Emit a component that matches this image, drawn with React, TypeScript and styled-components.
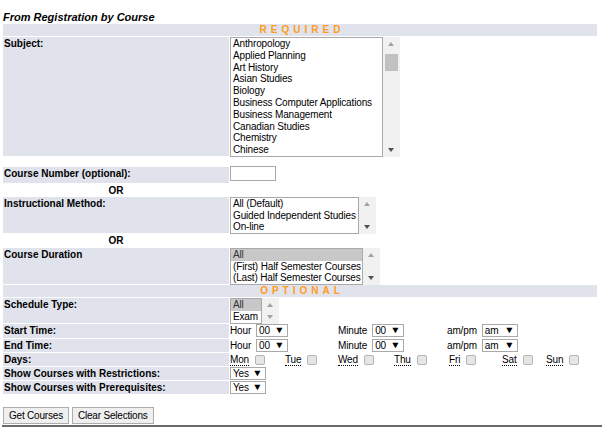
import React from "react";
import styled, { createGlobalStyle } from "styled-components";

const GlobalStyle = createGlobalStyle`
  html, body { margin: 0; padding: 0; background: #ffffff; }
  body {
    font-family: "Liberation Sans", Arial, sans-serif;
    color: #000000;
  }
`;

const LAV = "#e1e3ec";

const Page = styled.div`
  width: 600px;
  padding: 0 0 0 3px;
`;

const Title = styled.div`
  font-size: 11px;
  font-weight: bold;
  font-style: italic;
  line-height: 14px;
  padding-top: 10px;
  height: 14px;
`;

const FormTable = styled.div`
  width: 594px;
  display: flex;
  flex-direction: column;
  gap: 1px;
`;

const SectionHeader = styled.div`
  height: 12px;
  background: ${LAV};
  color: #ff9c1a;
  font-size: 10px;
  font-weight: bold;
  letter-spacing: 4px;
  line-height: 12px;
  text-align: center;
  padding-left: 4px;
`;

const Row = styled.div<{ $h: number }>`
  display: flex;
  height: ${(p) => p.$h}px;
`;

const Label = styled.div<{ $plain?: boolean }>`
  width: 226px;
  flex: none;
  background: ${(p) => (p.$plain ? "transparent" : LAV)};
  font-size: 10px;
  font-weight: bold;
  line-height: 13px;
  padding-left: 1px;
  box-sizing: border-box;
`;

const OrLabel = styled(Label)`
  text-align: center;
  padding-left: 0;
`;

const Value = styled.div`
  flex: 1;
  padding-left: 1px;
  font-size: 10px;
  letter-spacing: -0.15px;
  line-height: 13px;
  display: flex;
  align-items: flex-start;
`;

const ListWrap = styled.div`
  display: flex;
  align-items: stretch;
`;

const ListBox = styled.div<{ $w: number; $h: number; $lh: number }>`
  width: ${(p) => p.$w}px;
  height: ${(p) => p.$h}px;
  border: 1px solid #a9a9a9;
  box-sizing: border-box;
  overflow: hidden;
  font-size: 10px;
  line-height: ${(p) => p.$lh}px;
  background: #fff;
`;

const Option = styled.div<{ $selected?: boolean }>`
  padding-left: 2px;
  white-space: nowrap;
  background: ${(p) => (p.$selected ? "#c8c8c8" : "transparent")};
  color: ${(p) => (p.$selected ? "#333" : "#000")};
`;

const Scroll = styled.div<{ $h: number }>`
  width: 17px;
  height: ${(p) => p.$h}px;
  background: #f1f1f1;
  position: relative;
  flex: none;
`;

const Arrow = styled.div<{ $dir: "up" | "down"; $active?: boolean }>`
  position: absolute;
  left: 5px;
  ${(p) => (p.$dir === "up" ? "top: 5px;" : "bottom: 5px;")}
  width: 0;
  height: 0;
  border-left: 3.5px solid transparent;
  border-right: 3.5px solid transparent;
  ${(p) =>
    p.$dir === "up"
      ? `border-bottom: 4px solid ${p.$active ? "#505050" : "#a3a3a3"};`
      : `border-top: 4px solid ${p.$active ? "#505050" : "#a3a3a3"};`}
`;

const Thumb = styled.div`
  position: absolute;
  left: 2px;
  right: 2px;
  top: 17px;
  height: 17px;
  background: #c1c1c1;
`;

const TextInput = styled.div`
  width: 46px;
  height: 15px;
  border: 1px solid #a9a9a9;
  box-sizing: border-box;
  margin-top: -1px;
`;

const Drop = styled.div<{ $w: number }>`
  width: ${(p) => p.$w}px;
  height: 13px;
  border: 1px solid #a9a9a9;
  box-sizing: border-box;
  display: flex;
  align-items: center;
  justify-content: space-between;
  padding: 0 3px 0 2px;
  font-size: 10px;
  line-height: 11px;
  background: #fff;
`;

const Caret = styled.span`
  font-size: 9px;
  line-height: 11px;
  transform: scaleX(1.15);
`;

const TimeGrid = styled.div`
  display: grid;
  grid-template-columns: 108px 109px 109px;
`;

const TimeCell = styled.div`
  display: flex;
  align-items: center;
  gap: 5px;
  height: 13px;
`;

const DaysGrid = styled.div`
  display: flex;
`;

const DayCell = styled.div<{ $w: number }>`
  display: flex;
  align-items: center;
  gap: 6px;
  height: 13px;
  width: ${(p) => p.$w}px;
`;

const Abbr = styled.span`
  border-bottom: 1px dotted #000;
  line-height: 11px;
`;

const Check = styled.span`
  width: 10px;
  height: 10px;
  border: 1px solid #b4b4b4;
  border-radius: 2px;
  background: #e6e6e6;
  box-sizing: border-box;
  display: inline-block;
`;

const Spacer = styled.div<{ $h: number }>`
  height: ${(p) => p.$h}px;
`;

const ButtonBar = styled.div`
  display: flex;
  gap: 3px;
  padding-top: 13px;
  height: 17px;
`;

const Button = styled.div`
  height: 17px;
  box-sizing: border-box;
  border: 1px solid #adadad;
  background: #efefef;
  font-size: 10px;
  letter-spacing: -0.2px;
  line-height: 15px;
  padding: 0 5px;
`;

const Rule = styled.div`
  margin-top: 1px;
  margin-left: -1px;
  width: 600px;
  height: 2px;
  background: #6b6b6b;
`;

function List({
  items, w, h, lh, selected, up, down, thumb,
}: {
  items: string[]; w: number; h: number; lh: number; selected?: number;
  up?: boolean; down?: boolean; thumb?: boolean;
}) {
  return (
    <ListWrap>
      <ListBox $w={w} $h={h} $lh={lh}>
        {items.map((t, i) => (
          <Option key={t} $selected={i === selected}>{t}</Option>
        ))}
      </ListBox>
      <Scroll $h={h}>
        <Arrow $dir="up" $active={up} />
        {thumb && <Thumb />}
        <Arrow $dir="down" $active={down} />
      </Scroll>
    </ListWrap>
  );
}

function Select({ w, value }: { w: number; value: string }) {
  return (
    <Drop $w={w}>
      {value}
      <Caret>▼</Caret>
    </Drop>
  );
}

function TimeRow() {
  return (
    <TimeGrid>
      <TimeCell>Hour <Select w={32} value="00" /></TimeCell>
      <TimeCell>Minute <Select w={32} value="00" /></TimeCell>
      <TimeCell>am/pm <Select w={36} value="am" /></TimeCell>
    </TimeGrid>
  );
}

const subjects = [
  "Anthropology", "Applied Planning", "Art History", "Asian Studies", "Biology",
  "Business Computer Applications", "Business Management", "Canadian Studies",
  "Chemistry", "Chinese",
];

const days = [
  { d: "Mon", w: 55 }, { d: "Tue", w: 53 }, { d: "Wed", w: 56 }, { d: "Thu", w: 55 },
  { d: "Fri", w: 53 }, { d: "Sat", w: 44 }, { d: "Sun", w: 40 },
];

export default function App() {
  return (
    <>
      <GlobalStyle />
      <Page>
        <Title>From Registration by Course</Title>
        <FormTable>
          <SectionHeader>REQUIRED</SectionHeader>
          <Row $h={119}>
            <Label>Subject:</Label>
            <Value>
              <List items={subjects} w={153} h={120} lh={11.8} down thumb />
            </Value>
          </Row>
          <Spacer $h={9} />
          <Row $h={16}>
            <Label>Course Number (optional):</Label>
            <Value><TextInput /></Value>
          </Row>
          <Row $h={12}><OrLabel $plain>OR</OrLabel></Row>
          <Row $h={36}>
            <Label>Instructional Method:</Label>
            <Value>
              <List items={["All (Default)", "Guided Independent Studies", "On-line"]} w={129} h={37} lh={11.7} down />
            </Value>
          </Row>
          <Row $h={13}><OrLabel $plain>OR</OrLabel></Row>
          <Row $h={36}>
            <Label>Course Duration</Label>
            <Value>
              <List items={["All", "(First) Half Semester Courses", "(Last) Half Semester Courses"]} w={133} h={37} lh={11.7} selected={0} down />
            </Value>
          </Row>
          <SectionHeader>OPTIONAL</SectionHeader>
          <Row $h={25}>
            <Label>Schedule Type:</Label>
            <Value>
              <List items={["All", "Exam"]} w={32} h={26} lh={12} selected={0} />
            </Value>
          </Row>
          <Row $h={14}>
            <Label>Start Time:</Label>
            <Value><TimeRow /></Value>
          </Row>
          <Row $h={13}>
            <Label>End Time:</Label>
            <Value><TimeRow /></Value>
          </Row>
          <Row $h={13}>
            <Label>Days:</Label>
            <Value>
              <DaysGrid>
                {days.map((x) => (
                  <DayCell key={x.d} $w={x.w}>
                    <Abbr>{x.d}</Abbr>
                    <Check />
                  </DayCell>
                ))}
              </DaysGrid>
            </Value>
          </Row>
          <Row $h={13}>
            <Label>Show Courses with Restrictions:</Label>
            <Value><Select w={36} value="Yes" /></Value>
          </Row>
          <Row $h={13}>
            <Label>Show Courses with Prerequisites:</Label>
            <Value><Select w={36} value="Yes" /></Value>
          </Row>
        </FormTable>
        <ButtonBar>
          <Button>Get Courses</Button>
          <Button>Clear Selections</Button>
        </ButtonBar>
        <Rule />
      </Page>
    </>
  );
}
